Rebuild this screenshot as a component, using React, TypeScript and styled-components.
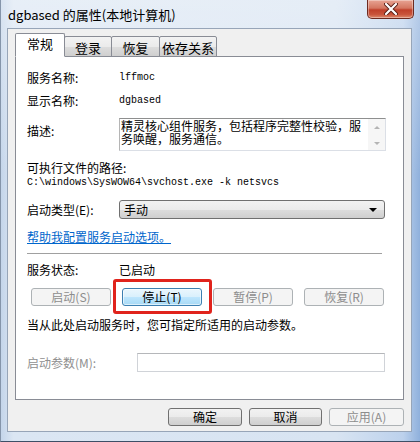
import React from 'react';
import styled, { createGlobalStyle, css } from 'styled-components';

const Global = createGlobalStyle`
  html, body { margin: 0; padding: 0; background: #ffffff; }
  body { width: 420px; height: 442px; overflow: hidden; }
  * { box-sizing: border-box; }
`;

const cjk = `"Noto Sans CJK SC", "Noto Sans", sans-serif`;
const mono = `"Liberation Mono", "Noto Sans CJK SC", monospace`;

const Window = styled.div`
  width: 420px;
  height: 442px;
  display: flex;
  flex-direction: column;
  border-left: 1px solid #8595aa;
  border-bottom: 1px solid #3d4f66;
  background:
    linear-gradient(180deg, rgba(255,255,255,0.35) 0%, rgba(255,255,255,0) 40%),
    linear-gradient(90deg, #c4d5ea 0%, #dbe6f3 3%, #d8e4f2 80%, #bcd1ec 96%, #8fb0dc 100%);
`;

const TitleBar = styled.div`
  height: 28px;
  display: flex;
  justify-content: space-between;
  align-items: flex-start;
  flex: none;
`;

const TitleText = styled.div`
  padding: 6px 0 0 7px;
  font-family: ${cjk};
  font-size: 13px;
  line-height: 18px;
  color: #000;
`;

const CloseButton = styled.div`
  width: 47px;
  height: 19px;
  margin-right: 6px;
  border: 1px solid #6d2a20;
  border-top: none;
  border-radius: 0 0 5px 5px;
  background: linear-gradient(180deg, #e8a493 0%, #d47660 45%, #c0402a 55%, #c9543b 80%, #dd8a6d 100%);
  box-shadow: inset 0 0 0 1px rgba(255,255,255,0.35);
  display: flex;
  align-items: center;
  justify-content: center;
`;

const Body = styled.div`
  flex: 1;
  margin: 0 8px 9px 6px;
  background: #f0f0f0;
  border: 1px solid #97a5b8;
  padding: 4px 7px 5px 7px;
  display: flex;
  flex-direction: column;
`;

const Tabs = styled.div`
  display: flex;
  align-items: flex-end;
  height: 24px;
  margin-bottom: -1px;
  position: relative;
  z-index: 1;
`;

const Tab = styled.div<{ $active?: boolean; $w: number }>`
  width: ${(p) => p.$w}px;
  font-family: ${cjk};
  font-size: 13px;
  color: #000;
  text-align: center;
  border: 1px solid #898c95;
  border-radius: 2px 2px 0 0;
  margin-left: -1px;
  &:first-child { margin-left: 0; }
  ${(p) =>
    p.$active
      ? css`
          height: 24px;
          line-height: 20px;
          background: #ffffff;
          border-bottom-color: #ffffff;
          position: relative;
          z-index: 2;
        `
      : css`
          height: 21px;
          line-height: 22px;
          background: linear-gradient(180deg, #f3f3f3 0%, #ebebeb 50%, #dddddd 51%, #cfcfcf 100%);
        `}
`;

const Panel = styled.div`
  flex: 1;
  background: #ffffff;
  border: 1px solid #898c95;
  padding: 13px 17px 0 11px;
  display: flex;
  flex-direction: column;
`;

const Row = styled.div<{ $h: number; $mt: number; $align?: string }>`
  display: flex;
  align-items: ${(p) => p.$align || 'center'};
  height: ${(p) => p.$h}px;
  margin-top: ${(p) => p.$mt}px;
  flex: none;
`;

const Label = styled.div<{ $w?: number; $muted?: boolean; $pt?: number }>`
  width: ${(p) => p.$w ?? 92}px;
  flex: none;
  font-family: ${cjk};
  font-size: 12px;
  line-height: 16px;
  padding-top: ${(p) => p.$pt ?? 0}px;
  color: ${(p) => (p.$muted ? '#8f8f8f' : '#000')};
  white-space: nowrap;
`;

const Value = styled.div`
  font-family: ${mono};
  font-size: 10px;
  line-height: 16px;
  color: #000;
  white-space: nowrap;
`;

const CjkValue = styled.div`
  font-family: ${cjk};
  font-size: 12px;
  line-height: 16px;
  color: #000;
`;

const DescBox = styled.div`
  width: 267px;
  height: 33px;
  border: 1px solid #dbdfe6;
  border-top-color: #8e8f8f;
  border-left-color: #b5b5b5;
  display: flex;
  background: #fff;
`;

const DescText = styled.div`
  flex: 1;
  padding: 0 0 0 1px;
  font-family: "Noto Sans CJK SC", sans-serif;
  font-size: 12px;
  line-height: 13px;
  color: #000;
`;

const ScrollCol = styled.div`
  width: 17px;
  flex: none;
  display: flex;
  flex-direction: column;
  justify-content: space-between;
  align-items: center;
  padding: 7px 0 5px;
  background: #f6f6f6;
`;

const Arrow = styled.div<{ $down?: boolean }>`
  width: 0;
  height: 0;
  border-left: 3px solid transparent;
  border-right: 3px solid transparent;
  ${(p) =>
    p.$down
      ? css`border-top: 3px solid #b4b4b4;`
      : css`border-bottom: 3px solid #b4b4b4;`}
`;

const Select = styled.div`
  width: 266px;
  height: 19px;
  border: 1px solid #707070;
  border-radius: 3px;
  background: linear-gradient(180deg, #f2f2f2 0%, #ebebeb 50%, #dddddd 51%, #cfcfcf 100%);
  display: flex;
  align-items: center;
  justify-content: space-between;
  padding: 0 5px 0 4px;
  font-family: ${cjk};
  font-size: 12px;
  color: #000;
`;

const Caret = styled.div`
  width: 0;
  height: 0;
  border-left: 4px solid transparent;
  border-right: 4px solid transparent;
  border-top: 4px solid #000;
  margin-right: 2px;
`;

const Link = styled.a`
  font-family: ${cjk};
  font-size: 12px;
  line-height: 16px;
  color: #0066cc;
  text-decoration: underline;
  cursor: pointer;
`;

const Separator = styled.div`
  height: 1px;
  width: 355px;
  margin-top: 8px;
  background: #a0a0a0;
  flex: none;
`;

const ButtonRow = styled.div`
  display: flex;
  gap: 11px;
  padding-left: 4px;
  margin-top: 10px;
  flex: none;
`;

const Btn = styled.div<{ $state?: 'normal' | 'disabled' | 'focused'; $w?: number }>`
  width: ${(p) => p.$w ?? 80}px;
  height: 18px;
  border-radius: 3px;
  font-family: ${cjk};
  font-size: 12px;
  line-height: 16px;
  display: flex;
  align-items: center;
  justify-content: center;
  white-space: nowrap;
  ${(p) =>
    p.$state === 'disabled'
      ? css`
          border: 1px solid #adb2b5;
          background: #f4f4f4;
          color: #8d8d8d;
        `
      : p.$state === 'focused'
      ? css`
          border: 1px solid #3c7fb1;
          background: linear-gradient(180deg, #eaf6fd 0%, #d9f0fc 50%, #bee6fd 51%, #a7d9f5 100%);
          color: #000;
          box-shadow: inset 0 0 0 1px rgba(255,255,255,0.6);
        `
      : css`
          border: 1px solid #707070;
          background: linear-gradient(180deg, #f2f2f2 0%, #ebebeb 50%, #dddddd 51%, #cfcfcf 100%);
          color: #000;
        `}
`;

const Highlight = styled.div`
  position: relative;
  &::after {
    content: '';
    position: absolute;
    top: -9px;
    left: -9px;
    right: -10px;
    bottom: -8px;
    border: 3px solid #e0231c;
    border-radius: 3px;
    pointer-events: none;
  }
`;

const Note = styled.div`
  margin-top: 11px;
  font-family: ${cjk};
  font-size: 12px;
  line-height: 16px;
  color: #000;
  flex: none;
`;

const Input = styled.div`
  width: 248px;
  height: 19px;
  border: 1px solid #d0d3d8;
  border-top-color: #b5b7ba;
  background: #fff;
`;

const Footer = styled.div`
  display: flex;
  justify-content: flex-end;
  gap: 7px;
  margin-top: 8px;
  flex: none;
`;

export default function App() {
  return (
    <>
      <Global />
      <Window>
        <TitleBar>
          <TitleText>dgbased 的属性(本地计算机)</TitleText>
          <CloseButton>
            <svg width="14" height="12" viewBox="0 0 14 12">
              <path d="M2 1 L12 11 M12 1 L2 11" stroke="#5a1f16" strokeWidth="4" strokeLinecap="round" />
              <path d="M2 1 L12 11 M12 1 L2 11" stroke="#ffffff" strokeWidth="2.2" strokeLinecap="round" />
            </svg>
          </CloseButton>
        </TitleBar>
        <Body>
          <Tabs>
            <Tab $active $w={50}>常规</Tab>
            <Tab $w={48}>登录</Tab>
            <Tab $w={49}>恢复</Tab>
            <Tab $w={58}>依存关系</Tab>
          </Tabs>
          <Panel>
            <Row $h={16} $mt={0}>
              <Label>服务名称:</Label>
              <Value>lffmoc</Value>
            </Row>
            <Row $h={16} $mt={7}>
              <Label>显示名称:</Label>
              <Value>dgbased</Value>
            </Row>
            <Row $h={33} $mt={9} $align="flex-start">
              <Label $pt={5}>描述:</Label>
              <DescBox>
                <DescText>精灵核心组件服务，包括程序完整性校验，服务唤醒，服务通信。</DescText>
                <ScrollCol>
                  <Arrow />
                  <Arrow $down />
                </ScrollCol>
              </DescBox>
            </Row>
            <Row $h={15} $mt={9}>
              <Label $w={200}>可执行文件的路径:</Label>
            </Row>
            <Row $h={16} $mt={0}>
              <Value>C:\windows\SysWOW64\svchost.exe -k netsvcs</Value>
            </Row>
            <Row $h={19} $mt={9}>
              <Label>启动类型(E):</Label>
              <Select>
                <span>手动</span>
                <Caret />
              </Select>
            </Row>
            <Row $h={16} $mt={10}>
              <Link>帮助我配置服务启动选项。</Link>
            </Row>
            <Separator />
            <Row $h={16} $mt={8}>
              <Label>服务状态:</Label>
              <CjkValue>已启动</CjkValue>
            </Row>
            <ButtonRow>
              <Btn $state="disabled">启动(S)</Btn>
              <Highlight>
                <Btn $state="focused">停止(T)</Btn>
              </Highlight>
              <Btn $state="disabled">暂停(P)</Btn>
              <Btn $state="disabled">恢复(R)</Btn>
            </ButtonRow>
            <Note>当从此处启动服务时，您可指定所适用的启动参数。</Note>
            <Row $h={19} $mt={20}>
              <Label $w={110} $muted>启动参数(M):</Label>
              <Input />
            </Row>
          </Panel>
          <Footer>
            <Btn $w={74}>确定</Btn>
            <Btn $w={73}>取消</Btn>
            <Btn $w={75} $state="disabled">应用(A)</Btn>
          </Footer>
        </Body>
      </Window>
    </>
  );
}
